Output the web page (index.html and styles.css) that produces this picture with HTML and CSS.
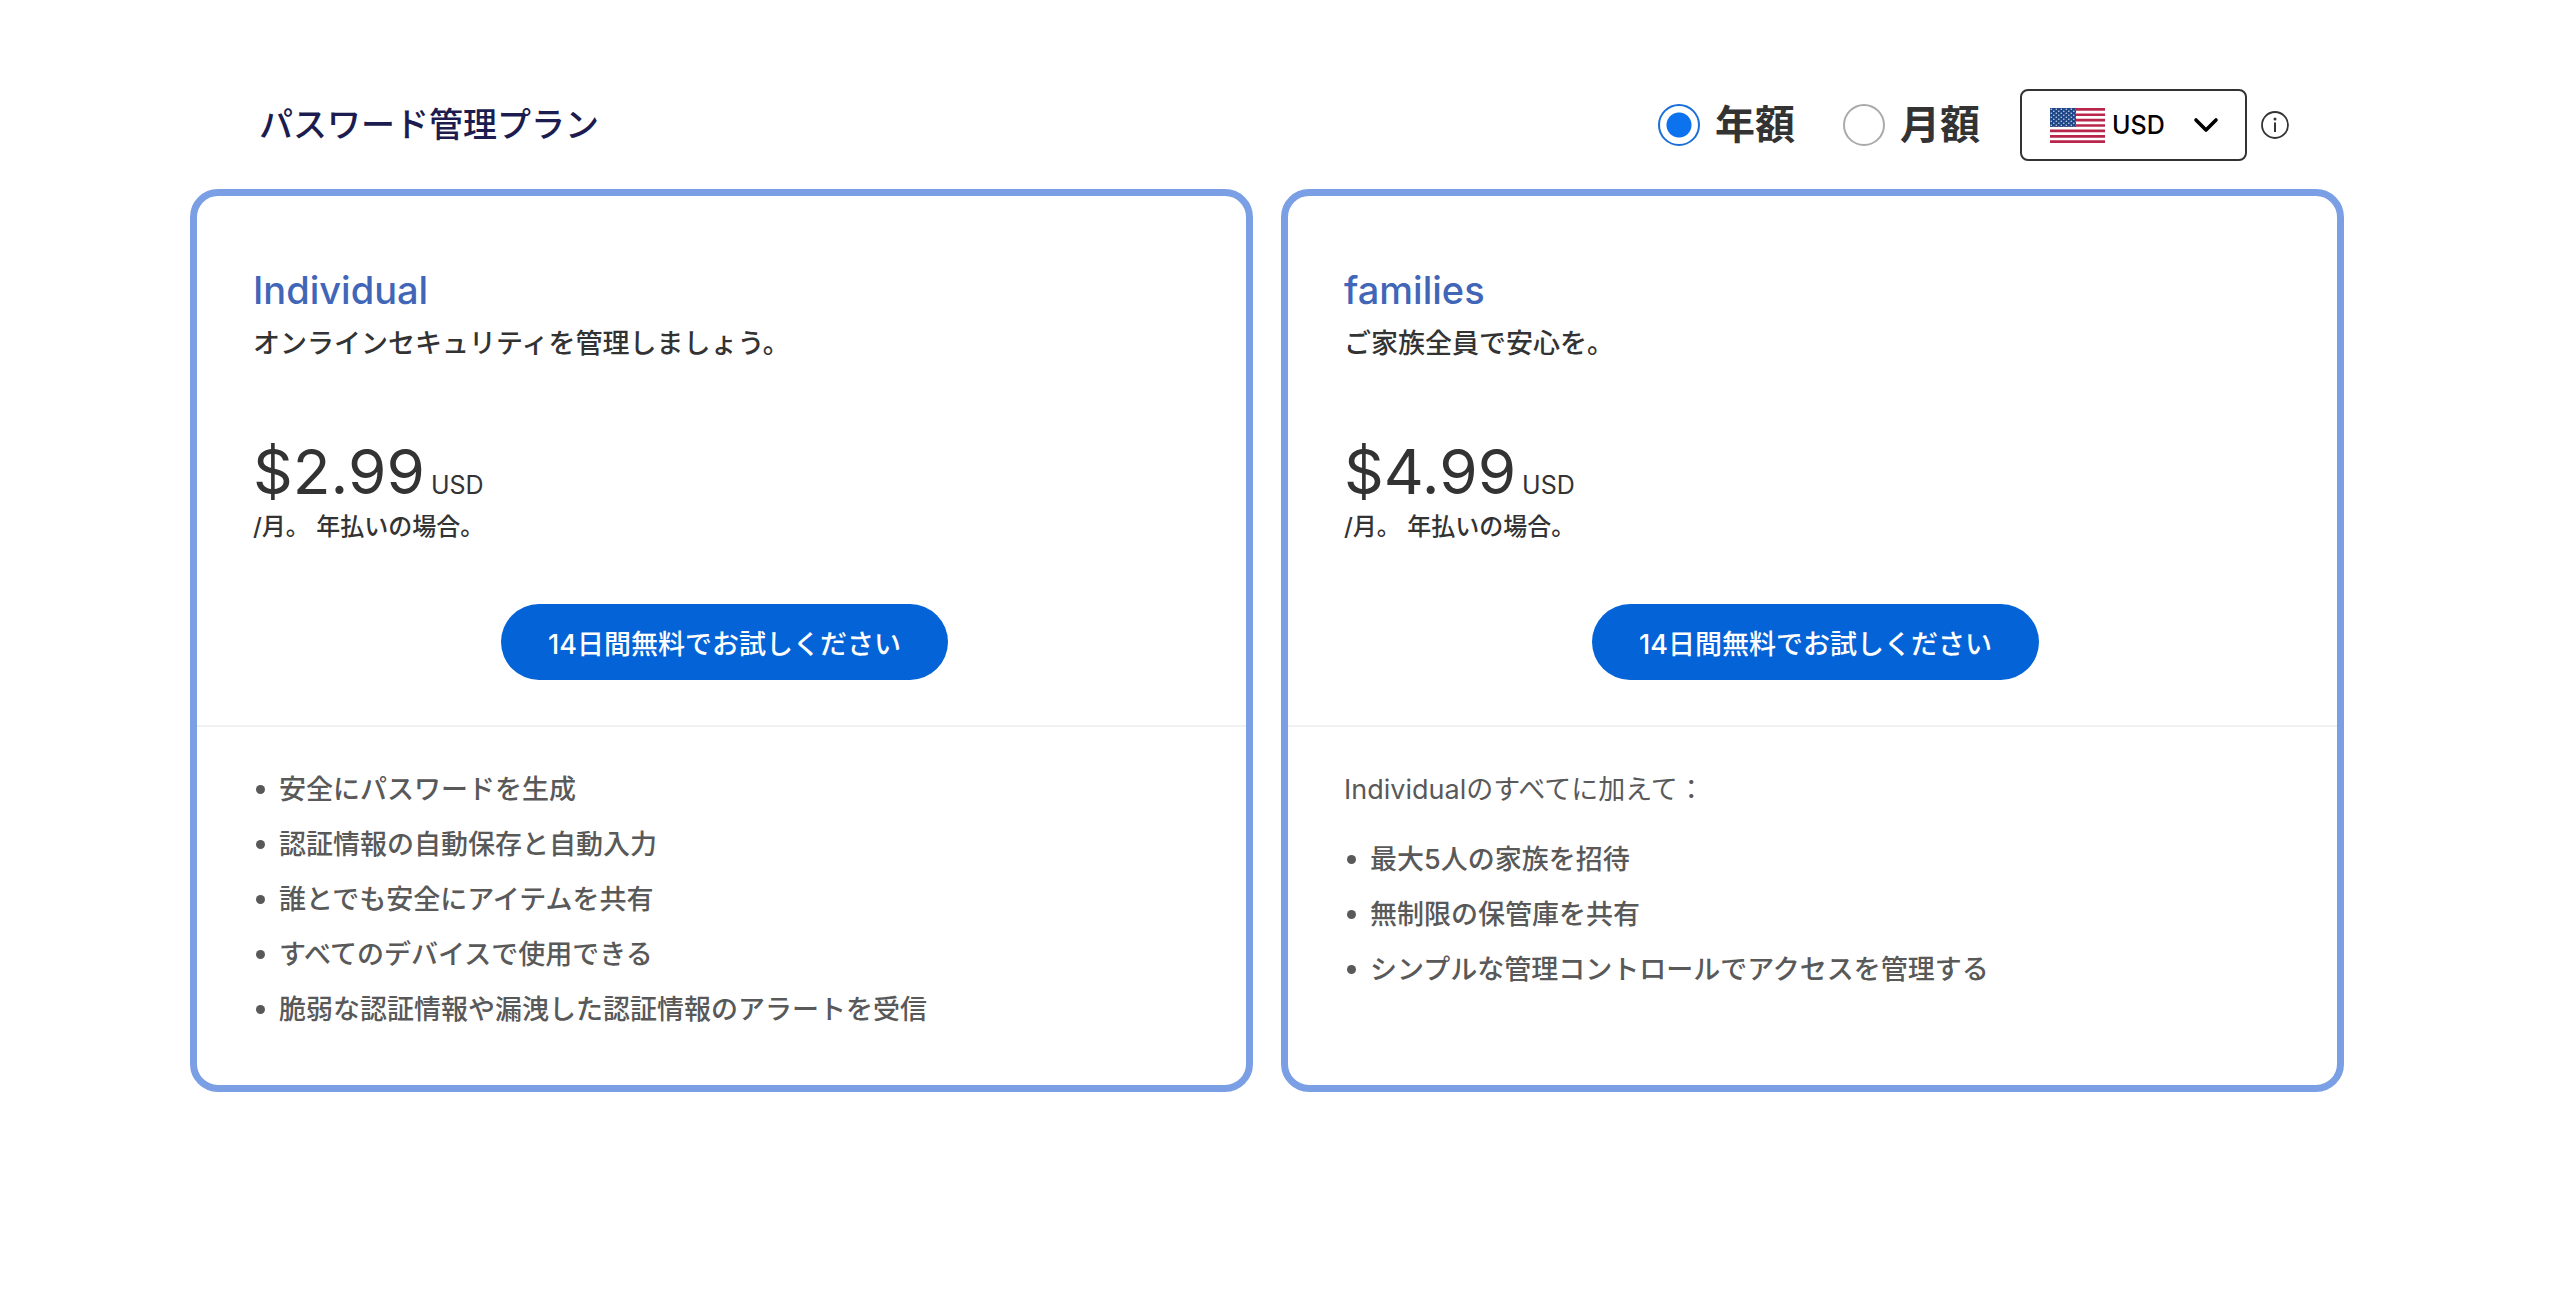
FILE: index.html
```html
<!DOCTYPE html>
<html lang="ja">
<head>
    <meta charset="UTF-8">
    <meta name="viewport" content="width=device-width, initial-scale=1.0">
    <title>パスワード管理プラン</title>
    <link rel="stylesheet" href="styles.css">
</head>
<body>
    <header class="plans-header">
        <h1>パスワード管理プラン</h1>
        <div class="billing">
            <label class="period"><input type="radio" name="period" value="year" checked>年額</label>
            <label class="period"><input type="radio" name="period" value="month">月額</label>
        </div>
        <div class="currency">
            <svg class="flag" viewBox="0 0 55 35" aria-hidden="true">
                <defs>
                    <pattern id="stars" width="5" height="4" patternUnits="userSpaceOnUse">
                        <circle cx="1.3" cy="1.2" r="0.8" fill="#c8d6ea"/>
                        <circle cx="3.8" cy="3.2" r="0.8" fill="#c8d6ea"/>
                    </pattern>
                </defs>
                <rect width="55" height="35" fill="#fff"/>
                <path stroke="#b8264c" stroke-width="2.7" d="M0 1.35h55M0 6.74h55M0 12.1h55M0 17.5h55M0 22.9h55M0 28.3h55M0 33.65h55"/>
                <rect width="26" height="18.8" fill="#1f4788"/>
                <rect width="26" height="18.8" fill="url(#stars)"/>
            </svg>
            <select aria-label="通貨">
                <option>USD</option>
            </select>
            <svg class="chevron" viewBox="0 0 26 16" aria-hidden="true">
                <path d="M3 3l10 10L23 3" fill="none" stroke="#000" stroke-width="3.6" stroke-linecap="round" stroke-linejoin="round"/>
            </svg>
        </div>
        <button class="info" type="button" aria-label="通貨について">
            <svg viewBox="0 0 28 28" aria-hidden="true">
                <circle cx="14" cy="14" r="13" fill="none" stroke="#333" stroke-width="1.8"/>
                <circle cx="14" cy="8" r="1.5" fill="#333"/>
                <path d="M14 11.5v9.5" stroke="#333" stroke-width="2"/>
            </svg>
        </button>
    </header>

    <main class="plans">
        <section class="plan">
            <div class="plan-top">
                <h2>Individual</h2>
                <p class="tagline">オンラインセキュリティを管理しましょう。</p>
                <p class="price">$2.99 <span>USD</span></p>
                <p class="note">/月。 年払いの場合。</p>
                <button class="trial" type="button">14日間無料でお試しください</button>
            </div>
            <div class="features">
                <ul>
                    <li>安全にパスワードを生成</li>
                    <li>認証情報の自動保存と自動入力</li>
                    <li>誰とでも安全にアイテムを共有</li>
                    <li>すべてのデバイスで使用できる</li>
                    <li>脆弱な認証情報や漏洩した認証情報のアラートを受信</li>
                </ul>
            </div>
        </section>

        <section class="plan">
            <div class="plan-top">
                <h2>families</h2>
                <p class="tagline">ご家族全員で安心を。</p>
                <p class="price">$4.99 <span>USD</span></p>
                <p class="note">/月。 年払いの場合。</p>
                <button class="trial" type="button">14日間無料でお試しください</button>
            </div>
            <div class="features">
                <p>Individualのすべてに加えて：</p>
                <ul>
                    <li>最大5人の家族を招待</li>
                    <li>無制限の保管庫を共有</li>
                    <li>シンプルな管理コントロールでアクセスを管理する</li>
                </ul>
            </div>
        </section>
    </main>
</body>
</html>
```
FILE: styles.css
```css
* {
    box-sizing: border-box;
}
body {
    margin: 0;
    padding: 89px 216px 89px 190px;
    font-family: Inter, "Noto Sans CJK JP", sans-serif;
    font-size: 27px;
    background-color: #fff;
    color: #333;
}
h1, h2, p, ul {
    margin: 0;
    padding: 0;
}
button, select {
    font-family: inherit;
    font-size: inherit;
}

/* Header */
.plans-header {
    display: flex;
    align-items: center;
    padding: 0 55px 0 69px;
    margin-bottom: 28px;
}
h1 {
    margin-right: auto;
    font-size: 34px;
    font-weight: 500;
    line-height: 48px;
    color: #1c1c50;
}
.billing {
    display: flex;
    gap: 48px;
    margin-right: 40px;
}
.period {
    display: flex;
    align-items: center;
    gap: 15px;
    font-size: 40px;
    font-weight: 700;
    line-height: 48px;
}
.period input {
    appearance: none;
    width: 42px;
    height: 42px;
    margin: 0;
    border: 2px solid #aaa;
    border-radius: 50%;
}
.period input:checked {
    border-color: #1a6fd8;
    background: radial-gradient(circle, #0d72ed 12px, #fff 13px);
}
.currency {
    display: flex;
    align-items: center;
    width: 227px;
    height: 72px;
    padding: 0 26px 0 28px;
    border: 2px solid #333;
    border-radius: 8px;
}
.flag {
    width: 55px;
    height: 35px;
}
.currency select {
    appearance: none;
    flex: 1;
    min-width: 0;
    padding: 0 0 0 7px;
    border: 0;
    background: transparent;
    color: #000;
    font-size: 25px;
    font-weight: 500;
}
.chevron {
    width: 26px;
    height: 16px;
}
.info {
    width: 28px;
    height: 28px;
    margin-left: 14px;
    padding: 0;
    border: 0;
    background: none;
}
.info svg {
    display: block;
}

/* Plan cards */
.plans {
    display: grid;
    grid-template-columns: 1fr 1fr;
    gap: 28px;
}
.plan {
    border: 7px solid #7b9fe4;
    border-radius: 28px;
}
.plan-top {
    padding: 70px 50px 45px 56px;
    border-bottom: 2px solid #f0f1f2;
}
h2 {
    font-size: 38px;
    font-weight: 500;
    line-height: 48px;
    color: #4166b8;
}
.tagline {
    margin-top: 10px;
    line-height: 40px;
    font-weight: 500;
}
.price {
    display: flex;
    align-items: baseline;
    gap: 6px;
    margin-top: 71px;
    font-size: 62px;
    line-height: 74px;
}
.price span {
    font-size: 25px;
    line-height: 36px;
}
.note {
    font-size: 24px;
    line-height: 36px;
    font-weight: 500;
}
.trial {
    display: block;
    height: 76px;
    margin: 59px auto 0;
    padding: 0 47px;
    border: 0;
    border-radius: 38px;
    background-color: #0463d6;
    color: #fff;
    font-weight: 500;
}
.features {
    padding: 43px 56px 56px;
    line-height: 39px;
    color: #595959;
}
.features p {
    margin-bottom: 31px;
}
.features ul {
    display: grid;
    gap: 16px;
    list-style: none;
}
.features li {
    display: flex;
    align-items: center;
    gap: 14px;
    padding-left: 3px;
    font-weight: 500;
}
.features li::before {
    content: "";
    width: 9px;
    height: 9px;
    border-radius: 50%;
    background-color: #595959;
}
```
